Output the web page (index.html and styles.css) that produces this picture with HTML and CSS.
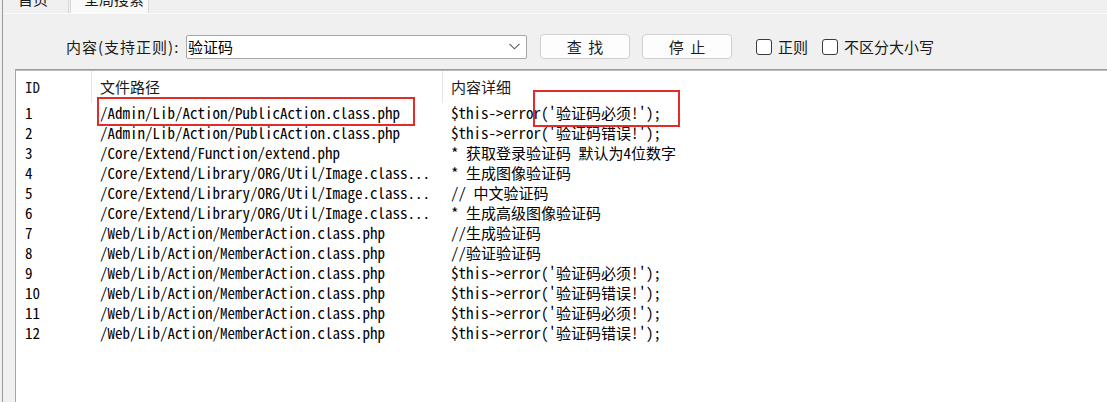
FILE: index.html
```html
<!DOCTYPE html>
<html lang="zh-CN">
<head>
<meta charset="utf-8">
<title>全局搜索</title>
<link rel="stylesheet" href="styles.css">
</head>
<body>
<div class="frame">
  <div class="tabs">
    <div class="tab">首页</div>
    <div class="tab active">全局搜索</div>
  </div>
  <div class="panel">
    <div class="search-row">
      <span class="label">内容(支持正则):</span>
      <div class="combo">
        <span class="combo-text">验证码</span>
        <svg class="chev" width="11" height="7" viewBox="0 0 11 7"><path d="M0.5 0.8 L5.5 5.8 L10.5 0.8" fill="none" stroke="#5a5a5a" stroke-width="1.1"/></svg>
      </div>
      <button class="btn">查 找</button>
      <button class="btn">停 止</button>
      <label class="chk"><span class="box"></span>正则</label>
      <label class="chk"><span class="box"></span>不区分大小写</label>
    </div>
    <div class="list">
      <div class="row head">
        <div class="c1">ID</div>
        <div class="c2">文件路径</div>
        <div class="c3">内容详细</div>
      </div>
      <div class="row"><div class="c1">1</div><div class="c2">/Admin/Lib/Action/PublicAction.class.php</div><div class="c3">$this-&gt;error('验证码必须!');</div></div>
      <div class="row"><div class="c1">2</div><div class="c2">/Admin/Lib/Action/PublicAction.class.php</div><div class="c3">$this-&gt;error('验证码错误!');</div></div>
      <div class="row"><div class="c1">3</div><div class="c2">/Core/Extend/Function/extend.php</div><div class="c3">* 获取登录验证码 默认为4位数字</div></div>
      <div class="row"><div class="c1">4</div><div class="c2">/Core/Extend/Library/ORG/Util/Image.class...</div><div class="c3">* 生成图像验证码</div></div>
      <div class="row"><div class="c1">5</div><div class="c2">/Core/Extend/Library/ORG/Util/Image.class...</div><div class="c3">// 中文验证码</div></div>
      <div class="row"><div class="c1">6</div><div class="c2">/Core/Extend/Library/ORG/Util/Image.class...</div><div class="c3">* 生成高级图像验证码</div></div>
      <div class="row"><div class="c1">7</div><div class="c2">/Web/Lib/Action/MemberAction.class.php</div><div class="c3">//生成验证码</div></div>
      <div class="row"><div class="c1">8</div><div class="c2">/Web/Lib/Action/MemberAction.class.php</div><div class="c3">//验证验证码</div></div>
      <div class="row"><div class="c1">9</div><div class="c2">/Web/Lib/Action/MemberAction.class.php</div><div class="c3">$this-&gt;error('验证码必须!');</div></div>
      <div class="row"><div class="c1">10</div><div class="c2">/Web/Lib/Action/MemberAction.class.php</div><div class="c3">$this-&gt;error('验证码错误!');</div></div>
      <div class="row"><div class="c1">11</div><div class="c2">/Web/Lib/Action/MemberAction.class.php</div><div class="c3">$this-&gt;error('验证码必须!');</div></div>
      <div class="row"><div class="c1">12</div><div class="c2">/Web/Lib/Action/MemberAction.class.php</div><div class="c3">$this-&gt;error('验证码错误!');</div></div>
      <div class="mark mark-path"></div>
      <div class="mark mark-msg"></div>
    </div>
  </div>
</div>
</body>
</html>
```
FILE: styles.css
```css
* { box-sizing: border-box; }
html, body {
  margin: 0;
  padding: 0;
  height: 100%;
  overflow: hidden;
  background: #f0f0f0;
}
body {
  font-family: "Noto Sans CJK SC", "Noto Sans", sans-serif;
  font-size: 15px;
  color: #1a1a1a;
}
.frame {
  margin-left: 2px;
  border-left: 1px solid #9a9a9a;
  height: 100%;
  display: flex;
  flex-direction: column;
}
.tabs {
  display: flex;
  height: 24px;
  margin-top: -11px;
  align-items: flex-end;
}
.tab {
  height: 24px;
  line-height: 20px;
  padding: 0 20px 0 15px;
  font-size: 15px;
  color: #1a1a1a;
  border-right: 1px solid #d9d9d9;
  background: #f0f0f0;
}
.tab.active {
  margin-left: 1px;
  width: 79px;
  padding: 0 0 0 13px;
  background: #f9f9f9;
  border-left: 1px solid #d9d9d9;
  border-right: 1px solid #d9d9d9;
}
.panel {
  flex: 1;
  border-top: 1px solid #fbfbfb;
  background: #f0f0f0;
  display: flex;
  flex-direction: column;
}
.search-row {
  display: flex;
  align-items: center;
  height: 25px;
  margin-top: 20px;
  padding-left: 63px;
}
.label {
  width: 120px;
  flex: none;
  font-size: 15px;
  letter-spacing: 1px;
  line-height: 24px;
  white-space: nowrap;
}
.combo {
  width: 341px;
  flex: none;
  height: 24px;
  background: #fff;
  border: 1px solid #a6a6a6;
  border-radius: 2px;
  display: flex;
  align-items: center;
  justify-content: space-between;
  padding: 0 6px 0 1px;
}
.combo-text {
  font-size: 15px;
  color: #000;
}
.chev { display: block; }
.btn {
  height: 25px;
  width: 90px;
  flex: none;
  margin-left: 12px;
  background: #fdfdfd;
  border: 1px solid #d0d0d0;
  border-radius: 4px;
  font-family: "Noto Sans CJK SC", sans-serif;
  font-size: 15px;
  color: #1a1a1a;
  padding: 0;
  line-height: 23px;
  word-spacing: 3px;
}
.btn:first-of-type { margin-left: 13px; }
.chk {
  display: flex;
  align-items: center;
  font-size: 15px;
  color: #1a1a1a;
  margin-left: 24px;
}
.chk + .chk { margin-left: 14px; }
.box {
  width: 16px;
  height: 16px;
  border: 1px solid #3c3c3c;
  border-radius: 3px;
  background: #fff;
  margin-right: 6px;
}
.list {
  position: relative;
  flex: 1;
  margin: 10px -20px 0 12px;
  background: #fff;
  border-top: 1px solid #9c9c9c;
  border-left: 1px solid #a8a8a8;
  box-shadow: inset 0 1px 0 #b9b9b9;
  padding-top: 1px;
  padding-left: 1px;
}
.row {
  display: grid;
  grid-template-columns: 75px 351px 1fr;
  height: 20px;
  line-height: 20px;
  font-family: "Noto Sans Mono CJK SC", "Liberation Mono", monospace;
  font-size: 15px;
  color: #000;
  white-space: nowrap;
}
.row > div { padding-left: 8px; overflow: hidden; }
.row.head {
  height: 32px;
  font-family: "Noto Sans CJK SC", sans-serif;
  color: #1a1a1a;
}
.row.head > div { line-height: 32px; }
.row.head .c1 { font-family: "Noto Sans Mono CJK SC", "Liberation Mono", monospace; }
.row.head .c1, .row.head .c2 { border-right: 1px solid #e5e5e5; }
.mark {
  position: absolute;
  border: 2px solid #e42a2a;
}
.mark-path { left: 81px; top: 27px; width: 318px; height: 29px; }
.mark-msg { left: 517px; top: 20px; width: 147px; height: 37px; }
```
